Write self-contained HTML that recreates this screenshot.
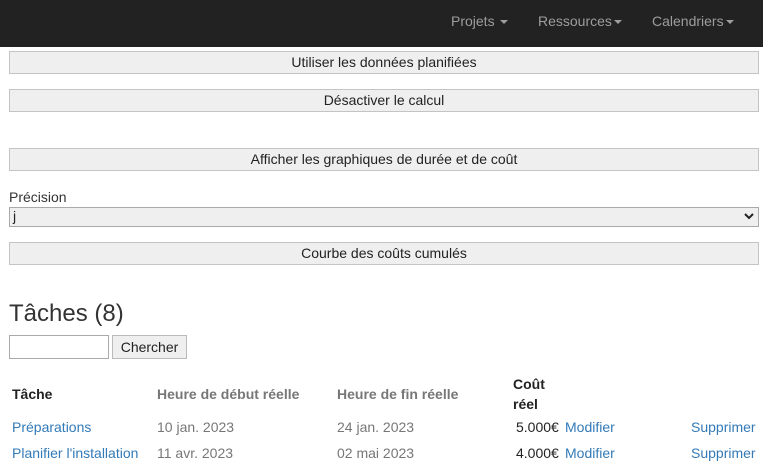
<!DOCTYPE html>
<html><head><meta charset="utf-8"><style>
*{box-sizing:border-box;margin:0;padding:0}
body{width:763px;height:469px;overflow:hidden;background:#fff;font-family:"Liberation Sans",sans-serif;font-size:14px;color:#333;position:relative}
.nav{position:absolute;left:0;top:0;width:763px;height:47px;background:#222;}
.nav span{position:absolute;top:13px;color:#9d9d9d;font-size:14px}
.car{display:inline-block;width:0;height:0;border-left:4px solid transparent;border-right:4px solid transparent;border-top:4px solid #9d9d9d;vertical-align:middle;margin-left:2px}
.btn{position:absolute;left:9px;width:750px;height:23px;background:#efefef;border:1px solid #c4c4c4;text-align:center;font-size:14px;line-height:21px;color:#222}
.abs{position:absolute;white-space:nowrap}
a,.l{color:#337ab7}
.g{color:#777}
.b{font-weight:bold}
</style></head><body>
<div class="nav">
<span style="left:451px">Projets <i class="car"></i></span>
<span style="left:538px">Ressources<i class="car"></i></span>
<span style="left:652px">Calendriers<i class="car"></i></span>
</div>
<div class="btn" style="top:51px">Utiliser les données planifiées</div>
<div class="btn" style="top:89px">Désactiver le calcul</div>
<div class="btn" style="top:148px">Afficher les graphiques de durée et de coût</div>
<div class="abs" style="left:9px;top:189px">Précision</div>
<div class="abs" style="left:9px;top:207px;width:750px;height:20px;background:#efefef;border:1px solid #aaa;line-height:17px;padding-left:3px;color:#222">j
<svg style="position:absolute;right:4px;top:5px" width="10" height="7" viewBox="0 0 10 7"><path d="M1 1L5 5L9 1" stroke="#222" stroke-width="2" fill="none"/></svg></div>
<div class="btn" style="top:242px">Courbe des coûts cumulés</div>
<div class="abs" style="left:9px;top:300px;font-size:24px;color:#333">Tâches (8)</div>
<div class="abs" style="left:9px;top:335px;width:100px;height:24px;border:1px solid #aaa"></div>
<div class="abs" style="left:112px;top:335px;width:75px;height:24px;border:1px solid #bbb;background:#efefef;line-height:22px;text-align:center;color:#222">Chercher</div>
<div class="abs b" style="left:12px;top:386px;color:#222">Tâche</div>
<div class="abs b g" style="left:157px;top:386px">Heure de début réelle</div>
<div class="abs b g" style="left:337px;top:386px">Heure de fin réelle</div>
<div class="abs b" style="left:513px;top:374px;line-height:20px;color:#222">Coût<br>réel</div>
<div class="abs l" style="left:12px;top:419px">Préparations</div>
<div class="abs g" style="left:157px;top:419px">10 jan. 2023</div>
<div class="abs g" style="left:337px;top:419px">24 jan. 2023</div>
<div class="abs" style="left:516px;top:419px;color:#222">5.000€</div>
<div class="abs l" style="left:565px;top:419px">Modifier</div>
<div class="abs l" style="left:691px;top:419px">Supprimer</div>
<div class="abs l" style="left:12px;top:445px">Planifier l'installation</div>
<div class="abs g" style="left:157px;top:445px">11 avr. 2023</div>
<div class="abs g" style="left:337px;top:445px">02 mai 2023</div>
<div class="abs" style="left:516px;top:445px;color:#222">4.000€</div>
<div class="abs l" style="left:565px;top:445px">Modifier</div>
<div class="abs l" style="left:691px;top:445px">Supprimer</div>
</body></html>
